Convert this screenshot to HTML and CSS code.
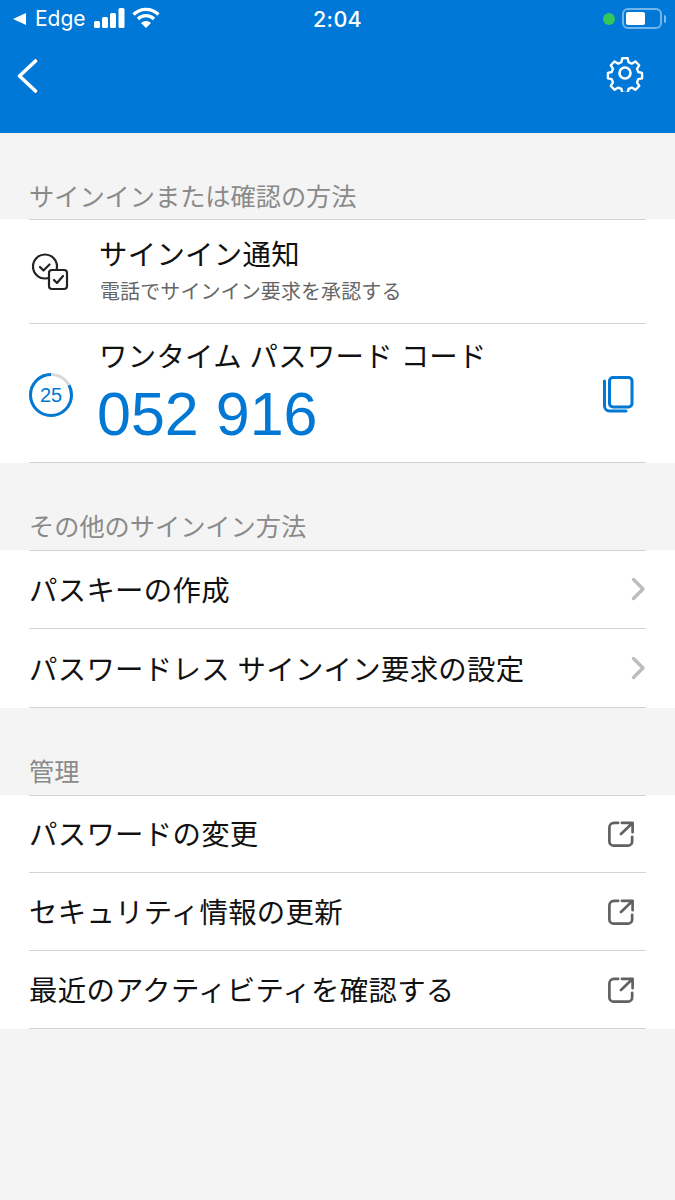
FILE: index.html
```html
<!DOCTYPE html>
<html lang="ja">
<head>
<meta charset="utf-8">
<title>Authenticator</title>
<link rel="stylesheet" href="styles.css">
</head>
<body>
<header class="header">
  <div class="status">
    <div class="status-left">
      <svg class="back-tri" width="15" height="14" viewBox="0 0 15 14"><path d="M14 1v12L1 7z" fill="#fff"/></svg>
      <span class="carrier">Edge</span>
      <svg class="signal" width="31" height="20" viewBox="0 0 31 20"><g fill="#fff"><rect x="0" y="13" width="6" height="7" rx="1.5"/><rect x="8" y="9" width="6" height="11" rx="1.5"/><rect x="16" y="5" width="6" height="15" rx="1.5"/><rect x="24.500" y="0" width="6" height="20" rx="1.5"/></g></svg>
      <svg class="wifi" width="28" height="21" viewBox="0 0 28 21"><g fill="none" stroke="#fff" stroke-width="3.200"><path d="M1.500 7.500a17.800 17.800 0 0 1 25 0"/><path d="M6 12a11.400 11.400 0 0 1 16 0"/></g><path d="M14 21l-5-5a7 7 0 0 1 10 0z" fill="#fff"/></svg>
    </div>
    <div class="status-time">2:04</div>
    <div class="status-right">
      <span class="dot"></span>
      <span class="battery"><span class="battery-fill"></span></span>
      <span class="battery-cap"></span>
    </div>
  </div>
  <nav class="nav">
    <svg class="nav-back" width="22" height="36" viewBox="0 0 22 36"><path d="M19.500 3 3.500 18l16 15" fill="none" stroke="#fff" stroke-width="3.600" stroke-linecap="round" stroke-linejoin="round"/></svg>
    <svg class="nav-gear" width="38" height="38" viewBox="0 0 38 38"><g fill="none" stroke="#fff" stroke-width="2.600" stroke-linejoin="round"><path d="M16 2.500h6l1 4.600 3.500 1.500 4-2.500 4.300 4.300-2.500 4 1.500 3.500 4.200 1v6l-4.200 1-1.500 3.500 2.500 4-4.300 4.300-4-2.500-3.500 1.500-1 4.300h-6l-1-4.300-3.500-1.500-4 2.500-4.300-4.300 2.500-4-1.500-3.500-4.200-1v-6l4.200-1 1.500-3.500-2.500-4 4.300-4.300 4 2.500L15 7.100z" transform="translate(1.900 1.900) scale(.9)"/><circle cx="19" cy="19" r="5.500"/></g></svg>
  </nav>
</header>

<main>
  <h2 class="section-label first">サインインまたは確認の方法</h2>
  <section class="group">
    <div class="row row-notify">
      <svg class="row-icon" width="40" height="40" viewBox="0 0 40 40"><g fill="none" stroke="#222" stroke-width="2.200" stroke-linecap="round" stroke-linejoin="round"><circle cx="15" cy="14.500" r="12"/><path d="M10 15l3.500 3.500 6-6"/><rect x="19" y="18" width="18" height="19" rx="3" fill="#fff"/><path d="M24 28l3 3 6-7"/></g></svg>
      <div class="row-text">
        <div class="title">サインイン通知</div>
        <div class="sub">電話でサインイン要求を承認する</div>
      </div>
    </div>
    <div class="row row-otp">
      <svg class="timer" width="46" height="46" viewBox="0 0 46 46">
        <circle cx="23" cy="23" r="20.500" fill="none" stroke="#d9d9d9" stroke-width="3"/>
        <circle class="timer-arc" cx="23" cy="23" r="20.500" pathLength="100" transform="rotate(-90 23 23) scale(1 -1) translate(0 -46)"/>
        <text x="23" y="30" text-anchor="middle" class="timer-num">25</text>
      </svg>
      <div class="row-text">
        <div class="title">ワンタイム パスワード コード</div>
        <div class="code">052 916</div>
      </div>
      <svg class="copy" width="32" height="38" viewBox="0 0 32 38"><g fill="none" stroke="#0078d4" stroke-width="3"><rect x="7.500" y="2.500" width="22.500" height="29.500" rx="3.500"/><path d="M2.500 6V31a5 5 0 0 0 5 5H24" stroke-linecap="round"/></g></svg>
    </div>
  </section>

  <h2 class="section-label">その他のサインイン方法</h2>
  <section class="group">
    <div class="row row-link">
      <span class="link-text">パスキーの作成</span>
      <svg class="chev" width="15" height="24" viewBox="0 0 15 24"><path d="M2.500 2.500 12 12l-9.500 9.500" fill="none" stroke="#bdbdbd" stroke-width="3.400" stroke-linecap="round" stroke-linejoin="round"/></svg>
    </div>
    <div class="row row-link">
      <span class="link-text">パスワードレス サインイン要求の設定</span>
      <svg class="chev" width="15" height="24" viewBox="0 0 15 24"><path d="M2.500 2.500 12 12l-9.500 9.500" fill="none" stroke="#bdbdbd" stroke-width="3.400" stroke-linecap="round" stroke-linejoin="round"/></svg>
    </div>
  </section>

  <h2 class="section-label">管理</h2>
  <section class="group">
    <div class="row row-ext">
      <span class="link-text">パスワードの変更</span>
      <svg class="ext" width="26" height="26" viewBox="0 0 28 28"><g fill="none" stroke="#616161" stroke-width="2.900" stroke-linejoin="round" stroke-linecap="round"><path d="M11 2H6.500A5 5 0 0 0 1.500 7v15a4.500 4.500 0 0 0 4.500 4.500h15.500a4.500 4.500 0 0 0 4.500-4.500v-5"/><path d="M15 2h11.500v10M26 2.500 14 14"/></g></svg>
    </div>
    <div class="row row-ext">
      <span class="link-text">セキュリティ情報の更新</span>
      <svg class="ext" width="26" height="26" viewBox="0 0 28 28"><g fill="none" stroke="#616161" stroke-width="2.900" stroke-linejoin="round" stroke-linecap="round"><path d="M11 2H6.500A5 5 0 0 0 1.500 7v15a4.500 4.500 0 0 0 4.500 4.500h15.500a4.500 4.500 0 0 0 4.500-4.500v-5"/><path d="M15 2h11.500v10M26 2.500 14 14"/></g></svg>
    </div>
    <div class="row row-ext">
      <span class="link-text">最近のアクティビティを確認する</span>
      <svg class="ext" width="26" height="26" viewBox="0 0 28 28"><g fill="none" stroke="#616161" stroke-width="2.900" stroke-linejoin="round" stroke-linecap="round"><path d="M11 2H6.500A5 5 0 0 0 1.500 7v15a4.500 4.500 0 0 0 4.500 4.500h15.500a4.500 4.500 0 0 0 4.500-4.500v-5"/><path d="M15 2h11.500v10M26 2.500 14 14"/></g></svg>
    </div>
  </section>
</main>
</body>
</html>
```
FILE: styles.css
```css
* { box-sizing: border-box; }
html, body { margin: 0; padding: 0; }
body {
  width: 675px;
  height: 1200px;
  overflow: hidden;
  background: #f4f4f4;
  font-family: "Liberation Sans", "Noto Sans CJK JP", sans-serif;
  color: #111;
}
.header { height: 133px; background: #0078d7; color: #fff; }
.status {
  height: 37px;
  display: flex;
  align-items: center;
  padding: 0 9px 0 12px;
}
.status-left, .status-right { flex: 1; display: flex; align-items: center; }
.status-right { justify-content: flex-end; }
.carrier { font-family: Inter, sans-serif; font-size: 21px; margin-left: 8px; }
.signal { margin-left: 8px; margin-top: -2px; }
.wifi { margin-left: 7px; margin-top: -2px; }
.status-time { font-family: Inter, sans-serif; font-size: 21.500px; font-weight: 500; letter-spacing: .3px; margin-right: 3px; }
.dot { width: 12px; height: 12px; border-radius: 50%; background: #34c759; margin-right: 7px; }
.battery {
  width: 40px;
  height: 21px;
  border: 2px solid rgba(255,255,255,.45);
  border-radius: 6px;
  padding: 2px;
  display: flex;
}
.battery-fill { width: 19px; background: #fff; border-radius: 2px; }
.battery-cap { width: 2px; height: 8px; margin-left: 2px; background: rgba(255,255,255,.5); border-radius: 0 2px 2px 0; }
.nav {
  display: flex;
  justify-content: space-between;
  align-items: center;
  padding: 1px 31px 0 16px;
  height: 74px;
}
.nav-back { margin-top: 2px; }
.nav-gear { margin-top: -3px; }
.section-label {
  margin: 0;
  height: 87px;
  padding: 41px 29px 0;
  line-height: 42px;
  font-size: 25.200px;
  font-weight: 400;
  color: #8a8a8a;
  font-family: "Noto Sans CJK JP", sans-serif;
  white-space: nowrap;
}
.section-label.first { height: 86px; }
.group { background: #fff; padding: 0 29px; }
.row {
  display: flex;
  align-items: center;
  border-top: 1px solid #d2d2d2;
  font-family: "Noto Sans CJK JP", sans-serif;
}
.group .row:last-child { border-bottom: 1px solid #d2d2d2; }
.row-notify { height: 104px; }
.row-otp { height: 140px; }
.row-link { height: 78px; padding-bottom: 2px; justify-content: space-between; }
.row-link:last-child { height: 80px; padding-bottom: 1px; }
.row-ext { height: 78px; padding-bottom: 2px; justify-content: space-between; }
.row-ext:first-child { height: 77px; padding-bottom: 3px; }
.row-ext:last-child { height: 79px; padding-bottom: 1px; }
.row-icon { flex: none; margin-left: 1px; margin-right: 29px; }
.row-text { flex: 1; min-width: 0; }
.title { font-size: 28.400px; line-height: 34px; letter-spacing: .3px; word-spacing: 1px; color: #111; white-space: nowrap; }
.row-notify .title { margin-top: -2px; }
.row-otp .title { margin-left: 1px; }
.sub { font-size: 20px; line-height: 28px; margin: 7px 0 0 1px; letter-spacing: .1px; color: #666; white-space: nowrap; }
.row-otp .timer { flex: none; margin: 4px 24px 0 -1px; }
.row-otp .row-text { margin-top: -2px; }
.code {
  font-family: "Liberation Sans", sans-serif;
  font-size: 61px;
  line-height: 66px;
  letter-spacing: 0;
  color: #0078d4;
  margin: 9px 0 0 -1px;
  white-space: nowrap;
}
.timer-arc { fill: none; stroke: #0078d4; stroke-width: 3; stroke-dasharray: 83 100; }
.timer-num { font-family: "Liberation Sans", sans-serif; font-size: 20px; fill: #0078d4; }
.copy { flex: none; margin: 2px 12px 0 0; }
.link-text { font-size: 28.400px; line-height: 34px; letter-spacing: .3px; word-spacing: 1px; white-space: nowrap; }
.chev { flex: none; }
.ext { flex: none; margin: 2px 12px 0 0; }
```
